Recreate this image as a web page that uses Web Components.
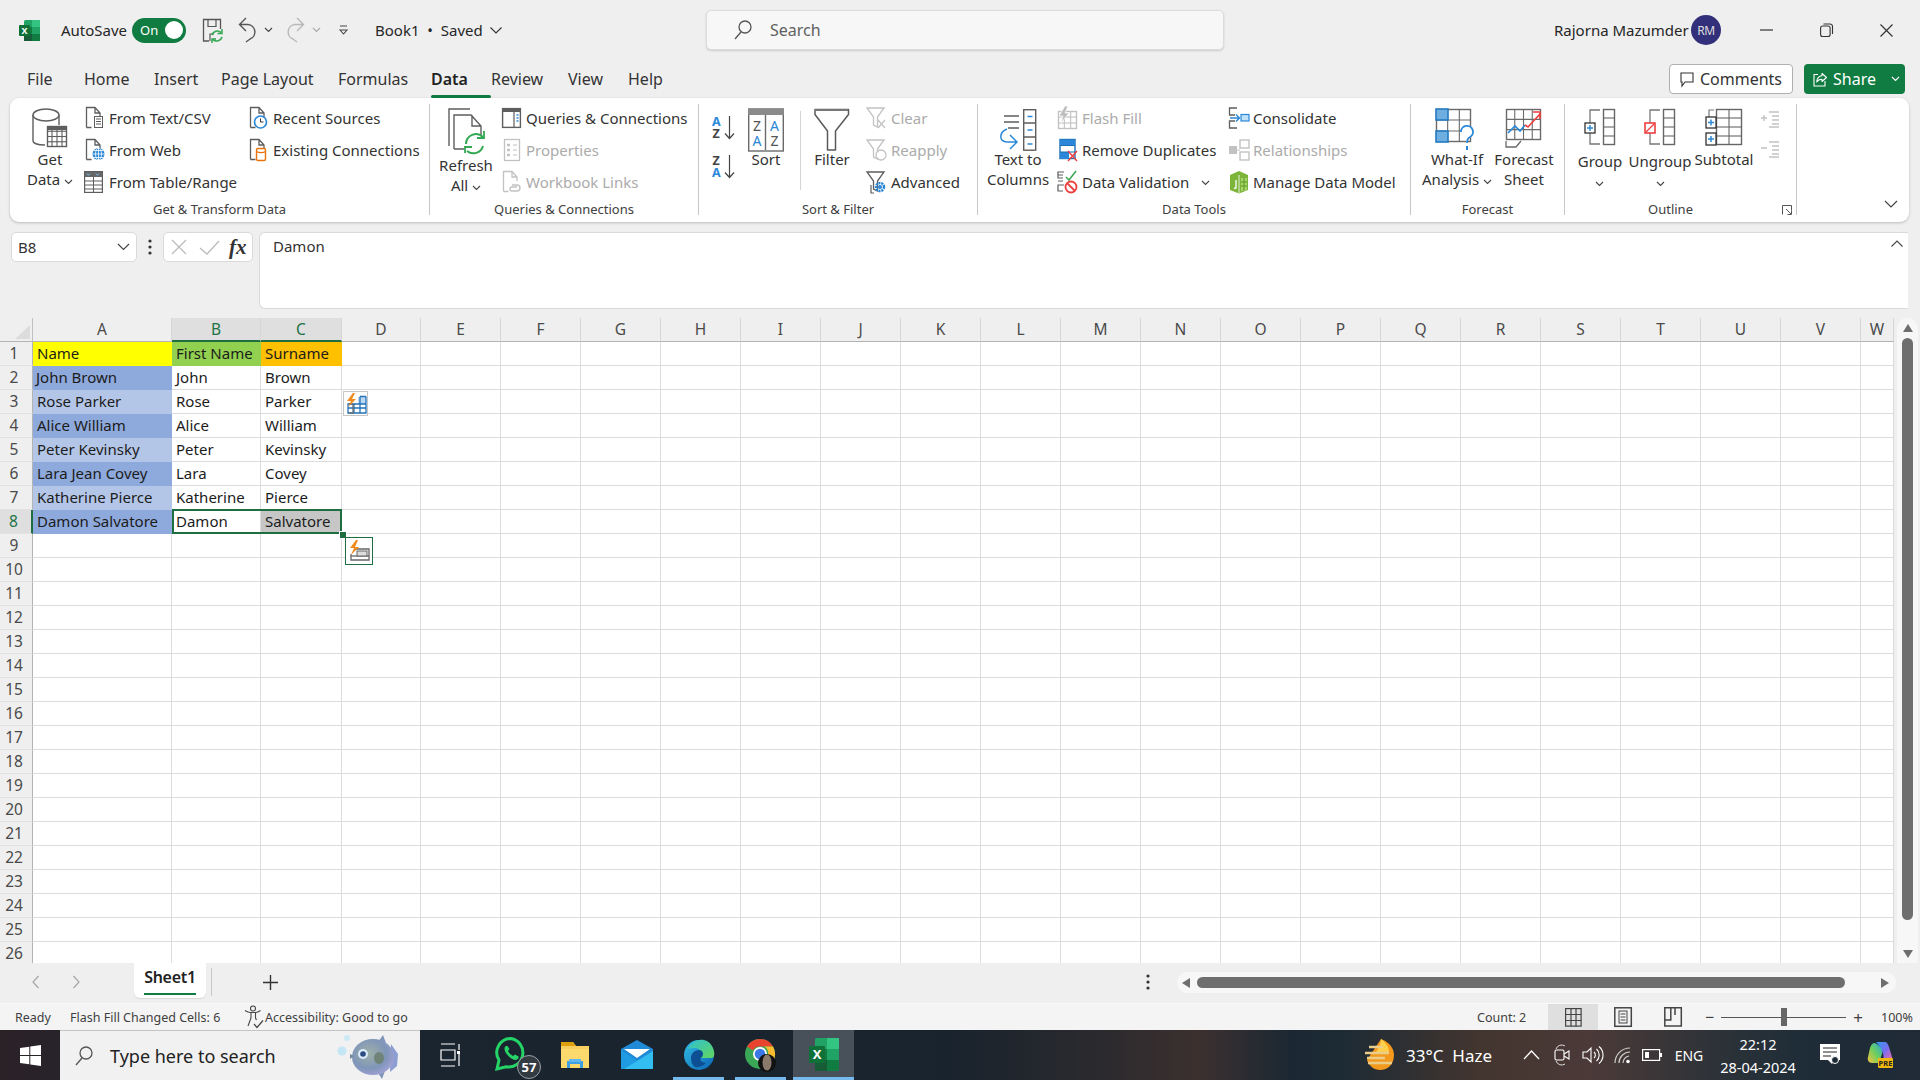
<!DOCTYPE html>
<html><head><meta charset="utf-8"><title>Book1 - Excel</title>
<style>
html,body{margin:0;padding:0;width:1920px;height:1080px;overflow:hidden;background:#efefef;font-family:"Noto Sans","Open Sans",sans-serif;color:#262626}
body{display:flex;flex-direction:column}
</style></head><body>
<xl-title></xl-title>
<xl-tabs></xl-tabs>
<xl-ribbon>
  <xl-group w="420" label="Get &amp; Transform Data">
    <xl-big icon="getdata" w="68" style="margin-left:6px">Get<br>Data <xl-icon name="chev"></xl-icon></xl-big>
    <xl-col w="164"><xl-small icon="fromtext">From Text/CSV</xl-small><xl-small icon="fromweb">From Web</xl-small><xl-small icon="fromtable">From Table/Range</xl-small></xl-col>
    <xl-col w="160"><xl-small icon="recent">Recent Sources</xl-small><xl-small icon="existing">Existing Connections</xl-small></xl-col>
  </xl-group>
  <xl-group w="269" label="Queries &amp; Connections">
    <xl-big icon="refresh" w="68" iz="53" style="margin-left:2px">Refresh<br>All <xl-icon name="chev"></xl-icon></xl-big>
    <xl-col w="190" style="margin-left:1px"><xl-small icon="queries">Queries &amp; Connections</xl-small><xl-small icon="props" dis>Properties</xl-small><xl-small icon="links" dis>Workbook Links</xl-small></xl-col>
  </xl-group>
  <xl-group w="279" label="Sort &amp; Filter">
    <xl-col w="24" style="margin-left:13px"><xl-icon name="az" style="margin-top:13px"></xl-icon><xl-icon name="za" style="margin-top:13px"></xl-icon></xl-col>
    <xl-big icon="sort" w="50" style="margin-left:5px">Sort</xl-big>
    <xl-vr style="margin-left:9px"></xl-vr>
    <xl-big icon="filter" w="50" style="margin-left:6px">Filter</xl-big>
    <xl-col w="110" style="margin-left:9px"><xl-small icon="clear" dis>Clear</xl-small><xl-small icon="reapply" dis>Reapply</xl-small><xl-small icon="advanced">Advanced</xl-small></xl-col>
  </xl-group>
  <xl-group w="433" label="Data Tools">
    <xl-big icon="t2c" w="68" style="margin-left:6px">Text to<br>Columns</xl-big>
    <xl-col w="171" style="margin-left:5px"><xl-small icon="flash" dis>Flash Fill</xl-small><xl-small icon="dups">Remove Duplicates</xl-small><xl-small icon="valid">Data Validation<xl-icon name="chev" style="position:absolute;left:144px;top:14px"></xl-icon></xl-small></xl-col>
    <xl-col w="170"><xl-small icon="consol">Consolidate</xl-small><xl-small icon="rel" dis>Relationships</xl-small><xl-small icon="model">Manage Data Model</xl-small></xl-col>
  </xl-group>
  <xl-group w="154" label="Forecast">
    <xl-big icon="whatif" w="76" style="margin-left:8px">What-If<br>Analysis <xl-icon name="chev"></xl-icon></xl-big>
    <xl-big icon="forecast" w="58">Forecast<br>Sheet</xl-big>
  </xl-group>
  <xl-group w="232" label="Outline" lp="20" launcher>
    <xl-big icon="group" w="60" iz="49" style="margin-left:5px">Group<br><xl-icon name="chev"></xl-icon></xl-big>
    <xl-big icon="ungroup" w="60" iz="49">Ungroup<br><xl-icon name="chev"></xl-icon></xl-big>
    <xl-big icon="subtotal" w="64" style="margin-left:2px">Subtotal</xl-big>
    <xl-col w="24" style="margin-left:4px"><xl-icon name="show" style="margin-top:8px"></xl-icon><xl-icon name="hide" style="margin-top:12px"></xl-icon></xl-col>
  </xl-group>
  <xl-icon slot="end" name="chevbig"></xl-icon>
</xl-ribbon>
<xl-formula></xl-formula>
<xl-sheet></xl-sheet>
<xl-sheetbar></xl-sheetbar>
<xl-status></xl-status>
<xl-taskbar></xl-taskbar>
<script>
const S='#5e5e5e',B='#2b88d8',L='#c2c2c2',R='#ee3f3f',GR='#33a853';
const doc=(c=S)=>`<path d="M2.5 21.5V1.5h8.5l5 5.5v4M11 1.5V7h5M2.5 21.5h5" fill="none" stroke="${c}" stroke-width="1.3"/>`;
const tblg=(x,y,w,h,cols,rows,c=S)=>{let s=`<rect x="${x+.5}" y="${y+.5}" width="${w-1}" height="${h-1}" fill="#fff" stroke="${c}" stroke-width="1.4"/>`;for(let i=1;i<cols;i++){const X=x+w*i/cols;s+=`<path d="M${X} ${y}v${h}" stroke="${c}" stroke-width="1.1"/>`}for(let i=1;i<rows;i++){const Y=y+h*i/rows;s+=`<path d="M${x} ${Y}h${w}" stroke="${c}" stroke-width="1.1"/>`}return s};
const fun=(c=S)=>`<path d="M1 1h17l-6.5 9v10l-4-2v-8z" fill="#fff" stroke="${c}" stroke-width="1.3" transform="translate(0 1)"/>`;
const I={
chev:[9,6,`<path d="M1 1l3.5 3.5L8 1" fill="none" stroke="#444" stroke-width="1.1"/>`],
chevbig:[14,9,`<path d="M1 1l6 6 6-6" fill="none" stroke="#444" stroke-width="1.2"/>`],
excel:[21,21,`<rect x="5" y="0" width="16" height="21" rx="1.5" fill="#21a366"/><rect x="13" y="0" width="8" height="7" fill="#33c481"/><rect x="5" y="7" width="8" height="7" fill="#107c41"/><rect x="13" y="14" width="8" height="7" fill="#107c41"/><rect x="5" y="14" width="8" height="7" fill="#185c37"/><rect x="0" y="5" width="11" height="11" rx="1" fill="#0f7038"/><text x="5.5" y="14" text-anchor="middle" font-size="9" font-weight="700" fill="#fff">X</text>`],
excel2:[30,34,`<rect x="6" y="0" width="24" height="33" rx="1.5" fill="#21a366"/><rect x="18" y="0" width="12" height="11" fill="#33c481"/><rect x="6" y="11" width="12" height="11" fill="#107c41"/><rect x="18" y="22" width="12" height="11" fill="#107c41"/><rect x="6" y="22" width="12" height="11" fill="#185c37"/><rect x="0" y="8" width="16" height="17" rx="1" fill="#0f7038"/><text x="8" y="21" text-anchor="middle" font-size="13" font-weight="700" fill="#fff">X</text>`],
save:[21,25,`<path d="M7 23H1.5V1.5h17V11" fill="none" stroke="#555" stroke-width="1.3"/><path d="M6 1.5v7h8v-7M8 23v-7h4" fill="none" stroke="#555" stroke-width="1.2"/><path d="M10 17a5.5 5.5 0 0 1 9-2.500M20 19a5.500 5.500 0 0 1-9 2.500" fill="none" stroke="${GR}" stroke-width="1.7"/><path d="M20 11v4.500h-4.500M10 25v-4h4" fill="none" stroke="${GR}" stroke-width="1.5"/>`],
undo:[19,26,`<path d="M8 1L1.500 7.500 8 14M1.500 7.500H10a7.500 7.500 0 0 1 2 14.500l-4 3" fill="none" stroke="#555" stroke-width="1.4"/>`],
redo:[19,26,`<path d="M11 1l6.500 6.500L11 14M17.500 7.500H9a7.500 7.500 0 0 0-2 14.500l4 3" fill="none" stroke="#b8b8b8" stroke-width="1.4"/>`],
cust:[9,11,`<path d="M1 1h7M1 5l3.500 4L8 5z" fill="none" stroke="#444" stroke-width="1.1"/>`],
search:[18,20,`<circle cx="11" cy="7" r="6" fill="none" stroke="#555" stroke-width="1.3"/><path d="M7 12l-6 7" stroke="#555" stroke-width="1.3"/>`],
min:[13,2,`<path d="M0 1h13" stroke="#333" stroke-width="1.2"/>`],
rest:[13,14,`<rect x=".6" y="3" width="9.500" height="10.500" rx="2" fill="none" stroke="#333" stroke-width="1.1"/><path d="M3.500 1H10a2.500 2.500 0 0 1 2.500 2.500V11" fill="none" stroke="#333" stroke-width="1.1"/>`],
close:[13,13,`<path d="M.5.5l12 12M12.500.5l-12 12" stroke="#333" stroke-width="1.2"/>`],
comment:[14,15,`<path d="M1 1h12v9H5l-3 4v-4H1z" fill="none" stroke="#333" stroke-width="1.1"/>`],
share:[14,15,`<path d="M9 1.500l4.500 4L9 9.500V7.200C6.500 7.200 4.800 8 3.700 10 3.700 6.500 6 3.800 9 3.700zM5 2.500H1v11.500h11V9" fill="none" stroke="#fff" stroke-width="1.1" stroke-linejoin="round"/>`],
chevw:[9,6,`<path d="M1 1l3.500 3.500L8 1" fill="none" stroke="#fff" stroke-width="1.2"/>`],
getdata:[36,40,`<path d="M1 7V33c0 2 4 4 12 4M27 7v10" fill="none" stroke="${S}" stroke-width="1.4"/><ellipse cx="14" cy="7" rx="13" ry="6" fill="#fff" stroke="${S}" stroke-width="1.4"/>${tblg(15,18,20,21,4,4)}<rect x="15" y="18" width="20" height="4" fill="${S}"/>`],
fromtext:[22,24,`${doc()}<rect x="10.500" y="10.500" width="8" height="11" fill="#fff" stroke="${S}"/><path d="M12 13h5M12 15.500h5M12 18h5" stroke="${S}"/>`],
fromweb:[22,24,`${doc()}<circle cx="14.500" cy="16" r="6" fill="${B}"/><path d="M8.500 16h12M14.500 10v12M10 12.500h9M10 19.500h9" stroke="#fff" stroke-width=".8"/><ellipse cx="14.500" cy="16" rx="3" ry="6" fill="none" stroke="#fff" stroke-width=".8"/>`],
fromtable:[22,24,`<rect x=".6" y="1.600" width="17.800" height="20.800" fill="#fff" stroke="${S}" stroke-width="1.2"/><rect x="1" y="2" width="17" height="5" fill="#666"/><path d="M3 3.500l1.500 1.800L6 3.500M12 3.500l1.500 1.800L15 3.500" stroke="#7cc0f0" fill="none"/><path d="M1 11h17M1 15h17M1 19h17M9.500 7v15" stroke="${S}"/>`],
recent:[22,24,`${doc()}<circle cx="12.500" cy="16" r="6" fill="#fff" stroke="${B}" stroke-width="1.700"/><path d="M12.500 12.500V16h3" fill="none" stroke="#333" stroke-width="1"/>`],
existing:[22,24,`${doc()}<rect x="8.500" y="10.500" width="9" height="12" rx="1.500" fill="#fff" stroke="#e8730c" stroke-width="1.400"/><path d="M8.500 13.500c2 1.500 7 1.500 9 0" fill="none" stroke="#e8730c" stroke-width="1.300"/>`],
refresh:[36,46,`<path d="M1 38V1h21M6 41V7h17l10 11v10M24 7v11h9M6 41h10" fill="none" stroke="${S}" stroke-width="1.400"/><path d="M18 36a10 10 0 0 1 17-7M35 38a10 10 0 0 1-16 5" fill="none" stroke="${GR}" stroke-width="2"/><path d="M36 23v7h-7M17 45v-6h7" fill="none" stroke="${GR}" stroke-width="1.800"/>`],
queries:[22,24,`<rect x="1.600" y="2.600" width="17.800" height="18.800" fill="#fff" stroke="${S}" stroke-width="1.400"/><rect x="1" y="2" width="19" height="4" fill="${S}"/><path d="M13 6v15" stroke="${S}" stroke-width="1.200"/><path d="M15.500 9h2M15.500 12h2M15.500 15h2" stroke="${B}" stroke-width="1.600"/>`],
props:[22,24,`<rect x="3.500" y="1.500" width="15" height="21" fill="#fff" stroke="${L}" stroke-width="1.300"/><path d="M6 7h3M6 12h3M6 17h3" stroke="${L}" stroke-width="2.500"/><path d="M12 7h4M12 12h4M12 17h4" stroke="${L}" stroke-width="1"/>`],
links:[22,24,`${doc(L)}<path d="M9 15h5a3 3 0 0 1 0 6H9a2 2 0 0 1 0-4h5" fill="none" stroke="${L}" stroke-width="1.400" transform="translate(2 0)"/>`],
az:[24,26,`<text x="0" y="11" font-size="12.500" font-weight="700" fill="${B}">A</text><text x=".5" y="23" font-size="12.500" font-weight="700" fill="#444">Z</text><path d="M17.500 1v22M13 18.500l4.500 5 4.500-5" fill="none" stroke="#444" stroke-width="1.200"/>`],
za:[24,26,`<text x=".5" y="11" font-size="12.500" font-weight="700" fill="#444">Z</text><text x="0" y="23" font-size="12.500" font-weight="700" fill="${B}">A</text><path d="M17.500 1v22M13 18.500l4.500 5 4.500-5" fill="none" stroke="#444" stroke-width="1.200"/>`],
sort:[36,44,`<rect x=".7" y="1" width="34.600" height="42" fill="#fff" stroke="#6a6a6a" stroke-width="1.400"/><rect x="0" y="1" width="36" height="6" fill="#8a8a8a"/><path d="M17.500 7v35" stroke="#6a6a6a" stroke-width="1.400"/><text x="9" y="23" text-anchor="middle" font-size="14" fill="#555">Z</text><text x="9" y="38" text-anchor="middle" font-size="14" fill="${B}">A</text><text x="26.500" y="23" text-anchor="middle" font-size="14" fill="${B}">A</text><text x="26.500" y="38" text-anchor="middle" font-size="14" fill="#555">Z</text>`],
filter:[36,44,`<path d="M1 1.500h33.500v5L21.500 23v19h-8V23L1 6.500z" fill="#fff" stroke="#5a5a5a" stroke-width="1.500" stroke-linejoin="round"/><path d="M1 2h33" stroke="#777" stroke-width="2"/>`],
clear:[22,24,`${fun(L)}<path d="M12 14l7 8M19 14l-7 8" stroke="${L}" stroke-width="1.200"/>`],
reapply:[22,24,`${fun(L)}<circle cx="15" cy="17" r="5" fill="#fff" stroke="${L}" stroke-width="1.300"/>`],
advanced:[22,24,`${fun(S)}<circle cx="14" cy="17" r="4" fill="none" stroke="${B}" stroke-width="2.500" stroke-dasharray="2 .8"/><circle cx="14" cy="17" r="2" fill="${B}"/><path d="M5 15v8h3" fill="none" stroke="${S}" stroke-width="1.200"/>`],
t2c:[38,44,`<path d="M5 8h15M5 14h15M9 20h11" stroke="${S}" stroke-width="1.300"/><rect x="24.700" y="1.700" width="12" height="40.500" fill="#fff" stroke="${S}" stroke-width="1.400"/><path d="M25 15h12M25 29h12" stroke="${S}" stroke-width="1.300"/><path d="M28.500 8.500h5M28.500 22h5M28.500 36h5" stroke="${B}" stroke-width="1.500"/><path d="M8 21C0 24-.5 34 8 34h9M11 27l7 7-7 7" fill="none" stroke="${B}" stroke-width="1.500"/>`],
flash:[22,24,`${tblg(1,5,19,18,3,3,L)}<path d="M8 0L2 10h4l-2 7 8-10H8l3-7z" fill="#bdbdbd" stroke="#fff" stroke-width=".7"/>`],
dups:[22,24,`<rect x="3" y="1.500" width="15" height="19" fill="#fff" stroke="#1a6fb5" stroke-width="1.400"/><rect x="3" y="1.500" width="15" height="6" fill="${B}"/><rect x="3" y="14" width="9" height="7" fill="${B}"/><path d="M3 7.500h15M3 14h15" stroke="#1a6fb5"/><path d="M11 13l9 10M20 13l-9 10" stroke="${R}" stroke-width="1.400"/>`],
valid:[22,24,`<path d="M7 2H1v6h5M1 5h5M7 15H1v6h5M1 11h5" fill="none" stroke="${S}" stroke-width="1.200"/><path d="M9 7l3 3 7-9" fill="none" stroke="#3aa655" stroke-width="1.500"/><circle cx="14" cy="17" r="5.500" fill="#fff" stroke="${R}" stroke-width="1.800"/><path d="M10 13l8 8" stroke="${R}" stroke-width="1.800"/>`],
consol:[22,24,`<path d="M9 2H1.500v7H7M9 22H1.500v-7H7" fill="none" stroke="${S}" stroke-width="1.300"/><path d="M2 12h9M8 8.500l3.500 3.500L8 15.500" fill="none" stroke="${B}" stroke-width="1.400"/><rect x="13" y="8.500" width="8" height="6.500" fill="#bfe0f7" stroke="${B}" stroke-width="1.200"/>`],
rel:[22,24,`<rect x="1" y="8" width="8" height="8" fill="${L}"/><rect x="12" y="2" width="9" height="8" fill="#fff" stroke="${L}" stroke-width="1.400"/><rect x="12" y="14" width="9" height="8" fill="#fff" stroke="${L}" stroke-width="1.400"/><path d="M9 12h3" stroke="${L}"/>`],
model:[22,24,`<path d="M2 5l9-4 9 4v15l-9 3.500L2 20z" fill="#7cb53a"/><path d="M11 5v18" stroke="#fff" stroke-width=".8"/><path d="M13 8v13h6V8z" fill="#a7d56b"/><path d="M8 10v8l-2 .5" fill="none" stroke="#fff" stroke-width="1.300"/><path d="M13 12h6M13 16h6M16 8v13" stroke="#5b9620"/>`],
whatif:[42,44,`${tblg(0,1,35,33,3,3,'#6a6a6a')}<rect x="0" y="1" width="12" height="11" fill="#6eaee0" stroke="#1f78c1" stroke-width="1.500"/><rect x="0" y="23" width="12" height="11" fill="#6eaee0" stroke="#1f78c1" stroke-width="1.500"/><path d="M25 24a6 6 0 1 1 9 5c-2 1-3 2-3 6" fill="#fff" stroke="${B}" stroke-width="1.800"/><path d="M31 38v4" stroke="${B}" stroke-width="2"/>`],
forecast:[36,40,`${tblg(0,1,35,31,4,3,'#6a6a6a')}<path d="M0 33v6h10l5-6" fill="#fff" stroke="#6a6a6a" stroke-width="1.300"/><path d="M2 25l7-7 5 5 5-6" fill="none" stroke="${B}" stroke-width="1.700"/><path d="M19 17l3 2 12-13M27 4h7v7" fill="none" stroke="${R}" stroke-width="1.700"/>`],
group:[32,38,`${tblg(19,1,12,36,1,4,'#666')}<path d="M16 2H6v13M6 23v13h10" fill="none" stroke="#777" stroke-width="1.300"/><rect x="1" y="15" width="10" height="10" fill="#fff" stroke="#333" stroke-width="1.300"/><path d="M3 20h6M6 17v6" stroke="${B}" stroke-width="1.400"/>`],
ungroup:[32,38,`${tblg(19,1,12,36,1,4,'#666')}<path d="M16 2H6v13M6 23v13h10" fill="none" stroke="#777" stroke-width="1.300"/><rect x="1" y="15" width="10" height="10" fill="#fff" stroke="${R}" stroke-width="1.600"/><path d="M2 24l8-8" stroke="${R}" stroke-width="1.300"/>`],
subtotal:[38,38,`${tblg(11,1,26,36,2,4,'#666')}<path d="M9 2H4v7" fill="none" stroke="#777" stroke-width="1.200"/><rect x="1" y="9" width="10" height="11" fill="#fff" stroke="#333" stroke-width="1.300"/><path d="M3 14.500h6M6 11.500v6" stroke="${B}" stroke-width="1.500"/><rect x="1" y="25" width="10" height="12" fill="#fff" stroke="#333" stroke-width="1.300"/><path d="M3 31h6M6 28v6" stroke="${B}" stroke-width="1.500"/>`],
show:[20,18,`<path d="M1 8h6M4 5v6M9 2h10M12 6h7M12 10h7M12 14h7M9 17h10" stroke="${L}" stroke-width="1.400"/>`],
hide:[20,18,`<path d="M1 8h6M9 2h10M12 6h7M12 10h7M12 14h7M9 17h10" stroke="${L}" stroke-width="1.400"/>`],
launch:[10,10,`<path d="M.5 9.500V.5h9v5M4 4l5 5M9.500 5.500v4h-4" fill="none" stroke="#555" stroke-width="1"/>`],
dots:[4,16,`<circle cx="2" cy="2" r="1.600" fill="#333"/><circle cx="2" cy="8" r="1.600" fill="#333"/><circle cx="2" cy="14" r="1.600" fill="#333"/>`],
x:[16,16,`<path d="M1 1l14 14M15 1L1 15" stroke="#bbb" stroke-width="1.300"/>`],
check:[21,15,`<path d="M1 8l7 6L20 1" fill="none" stroke="#bbb" stroke-width="1.300"/>`],
flashtbl:[22,22,`<path d="M13 4h8v7h-8z" fill="#bcd8f2"/><path d="M3 11h18v9H3zM3 15h18M9 11v9M15 3.500v16.500M21 3.500v16.500M15 3.500h6" fill="none" stroke="#2372b8" stroke-width="1.300"/><path d="M3 11h5v9H3" fill="none" stroke="#666" stroke-width="1.200"/><path d="M8 0L2 8h4l-3 6 8-8H7l3-6z" fill="#ee8a1e"/>`],
flashfl:[22,22,`<path d="M8 9h13v11H3v-6" fill="#fff" stroke="#666" stroke-width="1.300"/><path d="M3 16h18" stroke="#666" stroke-width="1.300"/><rect x="9" y="11" width="10" height="5" fill="#ddd" stroke="#666"/><path d="M8 0L2 8h4l-3 7 8-8H7l3-7z" fill="#ee8a1e"/>`],
left:[7,14,`<path d="M6.500 1L1 7l5.500 6" fill="none" stroke="#a6a6a6" stroke-width="1.200"/>`],
right:[7,14,`<path d="M.5 1L6 7 .5 13" fill="none" stroke="#a6a6a6" stroke-width="1.200"/>`],
plus:[15,15,`<path d="M0 7.500h15M7.500 0v15" stroke="#333" stroke-width="1.400"/>`],
access:[20,24,`<circle cx="9" cy="3.500" r="2.500" fill="none" stroke="#444" stroke-width="1.100"/><path d="M1 5.500c3 2 4 2 5.500 2h5c2 0 3-.5 5-2M7 8v5l-3 8M11.500 8v5l1 2" fill="none" stroke="#444" stroke-width="1.100"/><path d="M10 19l3 3.500 6-7" fill="none" stroke="#444" stroke-width="1.200"/>`],
vnorm:[17,19,`<rect x=".6" y=".6" width="15.500" height="17.500" fill="none" stroke="#444" stroke-width="1.200"/><path d="M.5 6.500h16M.5 12.500h16M6 .5v18M11 .5v18" stroke="#444" stroke-width="1.200"/>`],
vpage:[18,20,`<rect x=".8" y=".8" width="16.500" height="18.500" fill="none" stroke="#444" stroke-width="1.500"/><rect x="5" y="4" width="8" height="12" fill="none" stroke="#444"/><path d="M6.500 7h5M6.500 10h5M6.500 13h5" stroke="#444"/>`],
vbreak:[18,20,`<path d="M.8 19V.8h16.500V19zM.8 13h6V.8M11 .8V8" fill="none" stroke="#444" stroke-width="1.500"/>`],
win:[21,21,`<path d="M0 3l9.300-1.300v8.300H0zM10.300 1.600L21 0v10h-10.700zM0 11h9.300v8.300L0 18zM10.300 11H21v10l-10.700-1.600z" fill="#fff"/>`],
taskv:[20,24,`<path d="M1 1h14M1 23h14M1 7h14v10H1zM19 1v6M19 11v12" fill="none" stroke="#fff" stroke-width="1.200"/><rect x="17" y="8" width="3" height="3" fill="#fff"/>`],
wa:[36,36,`<path d="M16 1.500A14 14 0 0 0 4 23L2 32l9-2.200A14 14 0 1 0 16 1.500z" fill="none" stroke="#25d366" stroke-width="3"/><path d="M11 9c-2 1-2 4 0 7s6 7 9 7 4-2 3.500-3.500L20 17.500 18 19c-2-1-4-3-5-5l1.500-2L12.500 9z" fill="#25d366"/>`],
folder:[30,30,`<path d="M1 2h12l3 4h13v22H1z" fill="#f8cf5e"/><path d="M1 2h12l3 4H1z" fill="#dd9f0c"/><path d="M1 9h28v19H1z" fill="#fbd96c"/><path d="M7 21h16v7h-3v-4h-10v4H7z" fill="#3f9fe0"/><path d="M9 19h12v3H9z" fill="#61b7f2"/>`],
mail:[32,30,`<path d="M0 9L16 0l16 9v20H0z" fill="#1f8ad6"/><path d="M0 29V11l16 10 16-10v18z" fill="#34bdf0"/><path d="M3 9h26l-13 9z" fill="#fff"/><path d="M0 11l16 10L3 29H0z" fill="#1e9be2"/>`],
edge:[30,32,`<defs><linearGradient id="eg" x1="0" y1="0" x2="1" y2="1"><stop offset="0" stop-color="#33bfe6"/><stop offset="1" stop-color="#0b64b5"/></linearGradient><linearGradient id="eh" x1="0" y1="0" x2="1" y2="1"><stop offset="0" stop-color="#2fc0d0"/><stop offset="1" stop-color="#62d65e"/></linearGradient></defs><circle cx="15" cy="16" r="15" fill="url(#eg)"/><path d="M4 10C8-1 24-3 29 9c2 5 2 10-2 10H15c4-4 2-10-4-10-3 0-5 .5-7 1z" fill="url(#eh)"/><path d="M7 19c0-5 4-8 8-8s5 4 3 7c-3 2-2 5 4 6-4 4-9 5-11 4-3-2-4-5-4-9z" fill="#0e4f94"/>`],
chrome:[32,33,`<circle cx="15" cy="15" r="15" fill="#3aa757"/><path d="M2 7.500A15 15 0 0 1 28 7.500H15a7 7 0 0 0-7 4z" fill="#e8432e"/><path d="M28 7.500A15 15 0 0 1 15 30l6-11a7 7 0 0 0-2-11.500z" fill="#f9bb2d"/><circle cx="15" cy="15" r="7" fill="#fff"/><circle cx="15" cy="15" r="5.300" fill="#3b78e7"/><circle cx="22" cy="24" r="9" fill="#111"/><ellipse cx="22" cy="23.500" rx="4.500" ry="8" fill="#8a7a6c"/>`],
weather:[32,32,`<path d="M17 0c8 3 13 9 13 16 0 9-6 15-14 15-6 0-11-4-13-10z" fill="#f2991e"/><path d="M17 0c5 4 8 8 8 13H12c3-4 5-8 5-13z" fill="#ffd04a"/><path d="M5 8h14M1 14h24M3 19h18M4 24h24" stroke="#e9cd88" stroke-width="2.400"/>`],
up:[17,10,`<path d="M1 9l7.500-8L16 9" fill="none" stroke="#fff" stroke-width="1.300"/>`],
meet:[16,22,`<path d="M2 5a6 6 0 0 1 9-3M2 17a6 6 0 0 0 9 3" fill="none" stroke="#ddd" stroke-width="1"/><rect x="1" y="6" width="9" height="10" rx="1.500" fill="none" stroke="#fff" stroke-width="1.100"/><path d="M10 10l5-3v8l-5-3" fill="none" stroke="#fff" stroke-width="1.100"/>`],
spk:[20,20,`<path d="M1 7h4l4-4v14l-4-4H1z" fill="none" stroke="#fff" stroke-width="1.100"/><path d="M12 7a4 4 0 0 1 0 6M14.500 4a8 8 0 0 1 0 12M17 1.500a11 11 0 0 1 0 17" fill="none" stroke="#fff" stroke-width="1.100"/>`],
wifi:[18,18,`<path d="M1 17A15 15 0 0 1 16 2M5 17A11 11 0 0 1 16 6M9 17a7 7 0 0 1 6-7" fill="none" stroke="#ddd" stroke-width="1.200" opacity=".9"/><circle cx="14" cy="15.500" r="1.800" fill="#fff"/>`],
batt:[20,12,`<rect x=".6" y=".6" width="17" height="10.800" fill="none" stroke="#fff" stroke-width="1.200"/><rect x="3" y="3" width="4" height="6" fill="#fff"/><rect x="18" y="4" width="2" height="4" fill="#fff"/>`],
notif:[22,24,`<path d="M1 1h20v16h-6l-2 4-4-4H1z" fill="#fff"/><path d="M4 5h14M4 9h14M4 13h8" stroke="#222" stroke-width="1.200"/><circle cx="16" cy="17" r="3.500" fill="#1c2a35" stroke="#fff"/>`],
copilot:[26,28,`<defs><linearGradient id="cp" x1="0" y1="0" x2="1" y2="1"><stop offset="0" stop-color="#2aa0f0"/><stop offset=".5" stop-color="#7a6cf0"/><stop offset="1" stop-color="#f071a0"/></linearGradient><linearGradient id="cq" x1="0" y1="1" x2="1" y2="0"><stop offset="0" stop-color="#f9c23c"/><stop offset=".5" stop-color="#6ecf5e"/><stop offset="1" stop-color="#25a8e0"/></linearGradient></defs><path d="M9 1h9c2 0 3 2 4 5l3 10c1 3-1 5-3 5h-6c2-6-1-14-7-20z" fill="url(#cp)"/><path d="M8 2c-3 0-4 2-5 5L1 16c-1 3 1 6 4 6h7l3-9c1-4-1-8-7-11z" fill="url(#cq)"/><rect x="11" y="17" width="15" height="10" rx="1" fill="#f0b80e"/><text x="18.500" y="25" text-anchor="middle" font-size="7.500" font-weight="700" fill="#222">PRE</text>`],
fish:[64,48,`<defs><radialGradient id="fb" cx=".4" cy=".4" r=".7"><stop offset="0" stop-color="#9fb0a8"/><stop offset=".6" stop-color="#7f95b8"/><stop offset="1" stop-color="#a8a5dc"/></radialGradient></defs><circle cx="5" cy="19" r="4.500" fill="#bfe4f5" opacity=".9"/><circle cx="10" cy="6" r="3" fill="#c7e9f5" opacity=".9"/><path d="M41 10l5-7 3 8zM41 41l4 6 3-8z" fill="#7f95b8"/><path d="M54 12l7 10-1 12-7 6z" fill="#8c9ed2"/><ellipse cx="36" cy="25" rx="21" ry="18" fill="url(#fb)"/><path d="M17 24l-4-2v5z" fill="#76889c"/><circle cx="26" cy="22" r="5" fill="#dcecfb"/><circle cx="26" cy="22" r="2.800" fill="#2a4c80"/><ellipse cx="42" cy="26" rx="5" ry="6" fill="#6f8378"/>`]
};
function def(name,css,html,after){customElements.define(name,class extends HTMLElement{connectedCallback(){if(this.shadowRoot)return;const r=this.attachShadow({mode:'open'});r.innerHTML=`<style>${css}</style>`+(typeof html==='function'?html(this):html);if(after)after(this,r)}})}
def('xl-icon',':host{display:inline-block;line-height:0}svg{display:block;overflow:visible}',h=>{const[w,hh,s]=I[h.getAttribute('name')];return `<svg width="${w}" height="${hh}" viewBox="0 0 ${w} ${hh}">${s}</svg>`});
def('xl-title',`:host{display:flex;align-items:center;height:60px;font-size:15px;flex:none}
.s{display:flex;flex:none;align-items:center}
.tg{width:54px;height:25px;border-radius:13px;background:#107c41;color:#fff;font-size:13px;display:flex;align-items:center;justify-content:space-between;padding:0 3px 0 8px;box-sizing:border-box}
.tg i{width:18px;height:18px;border-radius:50%;background:#fff;display:block}
.q{width:518px;height:40px;box-sizing:border-box;background:#f7f7f7;border:1px solid #dcdcdc;border-radius:5px;box-shadow:0 1px 2px rgba(0,0,0,.15);display:flex;align-items:center;padding-left:27px;font-size:16px;color:#606060;gap:18px}
.av{width:30px;height:30px;border-radius:50%;background:#32307a;color:#ddd;font-size:12px;display:flex;align-items:center;justify-content:center;letter-spacing:-.5px}`,
`<span class="s" style="margin-left:19px;width:21px"><xl-icon name="excel"></xl-icon></span>
<span class="s" style="margin-left:21px;width:71px">AutoSave</span>
<span class="tg">On<i></i></span>
<span class="s" style="margin-left:16px;width:21px"><xl-icon name="save"></xl-icon></span>
<span class="s" style="margin-left:15px;width:19px"><xl-icon name="undo"></xl-icon></span>
<span class="s" style="margin-left:7px;width:12px"><xl-icon name="chev"></xl-icon></span>
<span class="s" style="margin-left:10px;width:19px"><xl-icon name="redo"></xl-icon></span>
<span class="s" style="margin-left:7px;width:12px;opacity:.4"><xl-icon name="chev"></xl-icon></span>
<span class="s" style="margin-left:15px;width:9px"><xl-icon name="cust"></xl-icon></span>
<span class="s" style="margin-left:27px;width:331px;gap:7px"><span>Book1 &nbsp;•&nbsp; Saved</span><svg width="12" height="7"><path d="M.5.5L6 6l5.500-5.500" fill="none" stroke="#333" stroke-width="1.100"/></svg></span>
<span class="q"><xl-icon name="search"></xl-icon><span>Search</span></span>
<span class="s" style="margin-left:330px;width:137px">Rajorna Mazumder</span>
<span class="av">RM</span>
<span class="s" style="margin-left:39px;width:13px"><xl-icon name="min"></xl-icon></span>
<span class="s" style="margin-left:47px;width:13px"><xl-icon name="rest"></xl-icon></span>
<span class="s" style="margin-left:47px;width:13px"><xl-icon name="close"></xl-icon></span>`);
def('xl-tabs',`:host{display:flex;height:38px;flex:none;align-items:center;font-size:16px;padding-left:27px;box-sizing:border-box;color:#333}
span{flex:none;position:relative;display:block}
.on{font-weight:600;color:#222}.on::after{content:"";position:absolute;left:0;right:0;bottom:-8px;height:3px;background:#107c41;border-radius:2px}
.btn{margin-left:auto;display:flex;gap:6px;align-items:center;justify-content:center;width:124px;height:30px;box-sizing:border-box;background:#fff;border:1px solid #b0b0b0;border-radius:4px;font-size:16px;color:#333}
.sh{margin-left:11px;display:flex;align-items:center;width:101px;height:30px;background:#107c41;color:#fff;border-radius:4px;padding-left:9px;box-sizing:border-box;gap:6px;font-size:16px}`,
`<span style="width:57px">File</span><span style="width:70px">Home</span><span style="width:67px">Insert</span><span style="width:117px">Page Layout</span><span style="width:93px">Formulas</span><span style="width:60px" class="on">Data</span><span style="width:77px">Review</span><span style="width:60px">View</span><span style="width:40px">Help</span>
<span class="btn"><xl-icon name="comment"></xl-icon>Comments</span><span class="sh" style="margin-right:15px"><xl-icon name="share"></xl-icon>Share<xl-icon name="chevw" style="margin-left:9px"></xl-icon></span>`);
def('xl-ribbon',`:host{display:flex;flex:none;width:1899px;height:124px;margin-left:10px;background:#fff;border-radius:9px;box-shadow:0 1px 3px rgba(0,0,0,.22);position:relative;font-size:15px;color:#333}
.e{flex:1;display:flex;justify-content:flex-end;align-items:flex-end;padding:0 11px 13px 0}`,`<slot></slot><div class="e"><slot name="end"></slot></div>`);
def('xl-group',`:host{display:flex;flex:none;position:relative}
.m{flex:1;display:flex;flex-direction:column;min-width:0}
.c{display:flex;height:96px;padding-top:4px}
.l{height:24px;line-height:22px;text-align:center;font-size:13px;color:#404040;box-sizing:border-box}
.sp{width:1px;background:#c8c8c8;margin:6px 0 7px;flex:none}
.lc{position:absolute;right:5px;bottom:7px}`,
h=>{h.style.width=h.getAttribute('w')+'px';const lp=h.getAttribute('lp')||0;return `<div class="m"><div class="c"><slot></slot></div><div class="l" style="padding-right:${lp}px">${h.getAttribute('label').replace('&','&amp;')}</div></div><div class="sp"></div>${h.hasAttribute('launcher')?'<xl-icon class="lc" name="launch"></xl-icon>':''}`});
def('xl-big',`:host{display:flex;flex-direction:column;align-items:center;flex:none;line-height:20px;text-align:center}
.i{display:flex;justify-content:center;padding-top:6px;box-sizing:border-box;flex:none}`,
h=>{h.style.width=h.getAttribute('w')+'px';const z=h.getAttribute('iz')||47;return `<div class="i" style="height:${+z}px"><xl-icon name="${h.getAttribute('icon')}"></xl-icon></div><div><slot></slot></div>`});
def('xl-col',`:host{display:flex;flex-direction:column;flex:none}`,h=>{h.style.width=h.getAttribute('w')+'px';return '<slot></slot>'});
def('xl-small',`:host{display:flex;align-items:center;height:32px;position:relative;white-space:nowrap}.i{width:25px;flex:none;display:flex}:host([dis]){color:#ababab}`,
h=>`<span class="i"><xl-icon name="${h.getAttribute('icon')}"></xl-icon></span><slot></slot>`);
def('xl-vr',`:host{display:block;flex:none;width:1px;height:79px;margin-top:9px;background:#d4d4d4}`,'');
def('xl-formula',`:host{display:flex;flex:none;height:96px;padding-top:10px;box-sizing:border-box;font-size:15px;color:#333}
.nb{margin-left:11px;width:126px;height:30px;box-sizing:border-box;background:#fff;border:1px solid #dadada;border-radius:5px;display:flex;align-items:center;justify-content:space-between;padding:0 6px 0 6px}
.d{margin-left:11px;width:15px;height:30px;display:flex;align-items:center}
.fx{width:90px;height:30px;box-sizing:border-box;background:#fff;border:1px solid #dadada;border-radius:5px;display:flex;align-items:center;padding-left:7px;gap:12px}
.fx em{font:italic 700 21px "Liberation Serif",serif;color:#333;margin-left:-3px}
.in{margin-left:6px;width:1649px;height:77px;box-sizing:border-box;background:#fff;border:1px solid #dadada;border-right:0;border-radius:6px 0 0 6px;padding:3px 0 0 13px;position:relative}
.in svg{position:absolute;right:5px;top:7px}`,
`<div class="nb"><span>B8</span><svg width="13" height="8"><path d="M1 1l5.500 5.500L12 1" fill="none" stroke="#444" stroke-width="1.200"/></svg></div><div class="d"><xl-icon name="dots"></xl-icon></div><div class="fx"><xl-icon name="x"></xl-icon><xl-icon name="check"></xl-icon><em>fx</em></div><div class="in">Damon<svg width="12" height="7"><path d="M.5 6.500L6 1l5.500 5.500" fill="none" stroke="#444" stroke-width="1.100"/></svg></div>`);
const DATA=[['Name','First Name','Surname'],['John Brown','John','Brown'],['Rose Parker','Rose','Parker'],['Alice William','Alice','William'],['Peter Kevinsky','Peter','Kevinsky'],['Lara Jean Covey','Lara','Covey'],['Katherine Pierce','Katherine','Pierce'],['Damon Salvatore','Damon','Salvatore']];
def('xl-sheet',`:host{display:flex;flex:none;height:645px;position:relative;background:#efefef;overflow:hidden}
.g{width:1894px;height:645px;overflow:hidden;display:grid;grid-template-columns:33px 139px 89px 81px 79px repeat(18,80px) 33px;grid-auto-rows:24px;font-size:15px;color:#1c1c1c;flex:none}
.g>div{box-sizing:border-box;line-height:23px;white-space:nowrap;overflow:hidden}
.h{background:#efefef;text-align:center;font-size:15.500px;color:#4a4a4a;border-right:1px solid #d6d6d6;border-bottom:1px solid #b4b4b4}
.corner{border-bottom:1px solid #b4b4b4;border-right:1px solid #c0c0c0;position:relative}
.corner i{position:absolute;left:15px;top:7px;width:0;height:0;border-left:15px solid transparent;border-bottom:14px solid #dcdcdc}
.rh{background:#efefef;text-align:center;padding-right:4px;font-size:15.500px;color:#4a4a4a;border-right:1px solid #b4b4b4;border-bottom:1px solid #e2e2e2}
.c{background:#fff;padding-left:4px;border-right:1px solid #dcdcdc;border-bottom:1px solid #dcdcdc}
.sel{background:#dfdfdf;color:#217346}
.h.sel{border-bottom:2px solid #1e6e42}
.rh.sel{border-right:2px solid #1e6e42}
.box{position:absolute;left:172px;top:191px;width:170px;height:25px;box-sizing:border-box;border:2px solid #1e6e42;pointer-events:none}
.hd{position:absolute;left:338.500px;top:212.500px;width:6px;height:6px;background:#1e6e42;border:1px solid #fff}
.f1{position:absolute;left:343px;top:73px;width:25px;height:25px;box-sizing:border-box;background:#fff;border:1px solid #c6c6c6;display:flex;align-items:center;justify-content:center}
.f2{position:absolute;left:345px;top:219px;width:28px;height:28px;box-sizing:border-box;background:#fff;border:1px solid #1e6e42;display:flex;align-items:center;justify-content:center}
.v{width:21px;margin-left:3px;height:660px;background:#f7f7f7;border-radius:11px;display:flex;flex-direction:column;align-items:center;flex:none}
.t{width:0;height:0;border-left:5.500px solid transparent;border-right:5.500px solid transparent}
.th{width:11px;height:582px;background:#6e6e6e;border-radius:6px;margin-top:6px}`,
()=>{let s='<div class="g"><div class="corner"><i></i></div>';const names=[..."ABCDEFGHIJKLMNOPQRSTUVW"];names.forEach((n,i)=>{s+=`<div class="h${i==1||i==2?' sel':''}">${n}</div>`});
const fills=[['#ffff00','#92d050','#ffc000']];
for(let r=1;r<=26;r++){s+=`<div class="rh${r==8?' sel':''}">${r}</div>`;for(let c=0;c<23;c++){let st='',t='';if(r<=8&&c<3){t=DATA[r-1][c];if(r==1)st=`background:${fills[0][c]};border-color:${fills[0][c]}`;else if(c==0){const col=r%2==0?'#8ea9db':'#b4c6e7';st=`background:${col};border-color:${col};padding-left:${r==2?3:4}px`}}
if(r==8&&c==2)st='background:#c6c6c6';s+=`<div class="c" style="${st}">${t}</div>`}}
s+=`</div><div class="v"><div class="t" style="border-bottom:8px solid #6e6e6e;margin-top:6px"></div><div class="th"></div><div class="t" style="border-top:8px solid #6e6e6e;margin-top:30px"></div></div>
<div class="box"></div><div class="hd"></div><div class="f1"><xl-icon name="flashtbl"></xl-icon></div><div class="f2"><xl-icon name="flashfl"></xl-icon></div>`;return s});
def('xl-sheetbar',`:host{display:flex;flex:none;height:40px;align-items:flex-start;position:relative;font-size:15px}
.n{flex:none;display:flex;align-items:center;height:38px}
.tab{flex:none;width:72px;height:35px;background:#fff;border-radius:0 0 6px 6px;box-shadow:0 1px 1px rgba(0,0,0,.1);position:relative;text-align:center;font-size:16px;font-weight:600;line-height:29px;letter-spacing:-.3px;color:#222;margin-left:54px}
.tab::after{content:"";position:absolute;left:10px;right:10px;bottom:3px;height:2px;background:#107c41}
.sep{flex:none;width:1px;height:28px;background:#c8c8c8;margin:5px 0 0 5px}
.tr{margin-left:auto;margin-right:24px;margin-top:9px;width:719px;height:21px;background:#f7f7f7;border-radius:11px;display:flex;align-items:center;position:relative;flex:none}
.th{margin-left:20px;width:648px;height:11px;background:#6e6e6e;border-radius:6px}
.a{position:absolute;top:5.500px;width:0;height:0;border-top:5.500px solid transparent;border-bottom:5.500px solid transparent}`,
`<div class="n" style="margin-left:32px"><xl-icon name="left"></xl-icon></div><div class="n" style="margin-left:34px"><xl-icon name="right"></xl-icon></div><div class="tab">Sheet1</div><div class="sep"></div><div class="n" style="margin-left:51px"><xl-icon name="plus"></xl-icon></div><div class="n" style="margin-left:868px;height:38px"><xl-icon name="dots"></xl-icon></div><div class="tr"><div class="a" style="left:5px;border-right:8px solid #6e6e6e"></div><div class="th"></div><div class="a" style="right:7px;border-left:8px solid #6e6e6e"></div></div>`);
def('xl-status',`:host{display:flex;flex:none;height:27px;align-items:center;background:#f4f4f4;font-size:12.500px;color:#404040;border-top:1px solid #fafafa;box-sizing:border-box}
.s{flex:none;display:flex;align-items:center}
.v{flex:none;width:50px;height:27px;display:flex;align-items:center;justify-content:center}
.sl{flex:none;width:125px;height:1px;background:#555;position:relative}
.sl i{position:absolute;left:60px;top:-8.500px;width:6px;height:18px;background:#666;display:block}`,
`<span class="s" style="margin-left:15px;width:55px">Ready</span><span class="s" style="width:174px">Flash Fill Changed Cells: 6</span><span class="s" style="width:21px"><xl-icon name="access"></xl-icon></span><span class="s" style="width:1212px">Accessibility: Good to go</span><span class="s" style="width:71px">Count: 2</span><span class="v" style="background:#dfdfdf"><xl-icon name="vnorm"></xl-icon></span><span class="v"><xl-icon name="vpage"></xl-icon></span><span class="v"><xl-icon name="vbreak"></xl-icon></span><span class="s" style="width:23px;justify-content:center;font-size:16px">−</span><span class="sl"><i></i></span><span class="s" style="margin-left:2px;width:20px;justify-content:center;font-size:17px">+</span><span class="s" style="margin-left:13px;width:40px">100%</span>`);
def('xl-taskbar',`:host{display:flex;flex:none;height:50px;align-items:stretch;color:#fff;font-size:15px;background:linear-gradient(90deg,#2b2227 0,#27232a 60px,#1a2530 430px,#19232d 950px,#2b2a2e 1100px,#3c302f 1200px,#1b2833 1290px,#1d2b35 1340px,#43352f 1480px,#4b3a38 1590px,#2c3238 1720px,#1f2d38 1800px,#1f2a36 1920px)}
.st{width:60px;flex:none;display:flex;align-items:center;justify-content:center}
.q{width:360px;flex:none;background:#f1f1f1;color:#222;display:flex;align-items:center;font-size:18px;box-sizing:border-box;border-top:1px solid #c4c4c4;position:relative}
.q xl-icon{margin-left:15px;margin-right:17px}
.q .fi{position:absolute;left:277px;top:1px;margin:0}
.a{width:62px;flex:none;display:flex;align-items:center;justify-content:center;position:relative;box-sizing:border-box}
.u::after{content:"";position:absolute;left:5px;right:6px;bottom:0;height:3px;background:#76b9ed}
.act{background:#48505a;margin-left:1px;width:61px}.act::after{content:"";position:absolute;left:0;right:0;bottom:0;height:3px;background:#76b9ed}
.bd{position:absolute;left:35px;top:25px;width:24px;height:24px;border-radius:50%;background:#333b42;border:1px solid #9aa0a5;box-sizing:border-box;font-size:13px;font-weight:700;text-align:center;line-height:22px}
.sp{flex:1}
.t{flex:none;display:flex;align-items:center;justify-content:center;white-space:nowrap}`,
`<div class="st"><xl-icon name="win"></xl-icon></div><div class="q"><xl-icon name="search"></xl-icon>Type here to search<xl-icon class="fi" name="fish"></xl-icon></div>
<div class="a" style="width:62px;justify-content:flex-start;padding-left:20px"><xl-icon name="taskv"></xl-icon></div>
<div class="a" style="margin-left:0"><xl-icon name="wa"></xl-icon><span class="bd">57</span></div><div class="a"><xl-icon name="folder"></xl-icon></div><div class="a"><xl-icon name="mail"></xl-icon></div><div class="a u"><xl-icon name="edge"></xl-icon></div><div class="a u"><xl-icon name="chrome"></xl-icon></div><div class="a act"><xl-icon name="excel2"></xl-icon></div>
<div class="sp"></div>
<div class="t" style="width:40px"><xl-icon name="weather"></xl-icon></div><div class="t" style="width:116px;justify-content:flex-start;padding-left:6px;box-sizing:border-box;font-size:17px">33°C&nbsp; Haze</div>
<div class="t" style="width:31px"><xl-icon name="up"></xl-icon></div><div class="t" style="width:29px"><xl-icon name="meet"></xl-icon></div><div class="t" style="width:31px"><xl-icon name="spk"></xl-icon></div><div class="t" style="width:31px"><xl-icon name="wifi"></xl-icon></div><div class="t" style="width:28px"><xl-icon name="batt"></xl-icon></div><div class="t" style="width:46px;font-size:14px">ENG</div>
<div class="t" style="width:92px;flex-direction:column;gap:3px;font-size:14.500px;line-height:20px"><span>22:12</span><span>28-04-2024</span></div><div class="t" style="width:52px"><xl-icon name="notif"></xl-icon></div><div class="t" style="width:48px"><xl-icon name="copilot"></xl-icon></div><div class="t" style="width:16px"></div>`);
</script>
</body></html>
